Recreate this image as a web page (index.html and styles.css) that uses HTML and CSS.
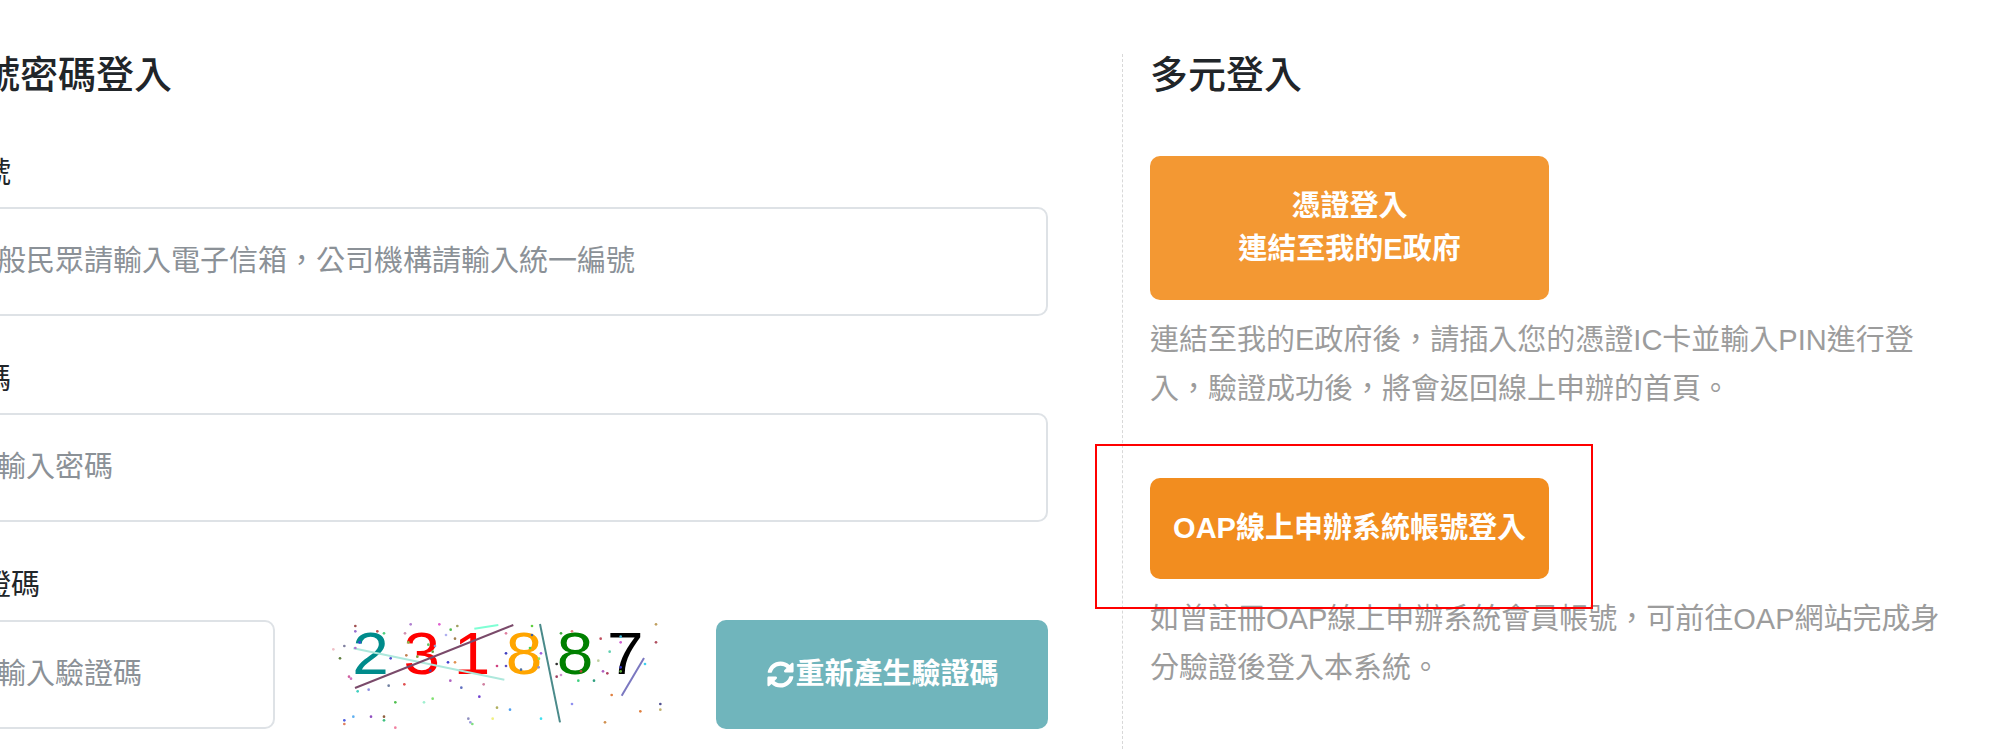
FILE: index.html
```html
<!DOCTYPE html>
<html lang="zh-Hant">
<head>
  <meta charset="UTF-8">
  <meta name="viewport" content="width=device-width, initial-scale=1.0">
  <title>線上申辦登入</title>
  <link rel="stylesheet" href="styles.css">
</head>
<body>
  <div class="login">
    <form class="login_form">
      <h2 class="title">帳號密碼登入</h2>

      <div class="field">
        <label class="field_label" for="account">帳號</label>
        <input class="field_input" id="account" type="text" placeholder="一般民眾請輸入電子信箱，公司機構請輸入統一編號">
      </div>

      <div class="field">
        <label class="field_label" for="password">密碼</label>
        <input class="field_input" id="password" type="password" placeholder="請輸入密碼">
      </div>

      <div class="field">
        <label class="field_label" for="captcha">驗證碼</label>
        <div class="captcha_row">
          <input class="field_input captcha_input" id="captcha" type="text" placeholder="請輸入驗證碼">
          <svg class="captcha_img" viewBox="0 18 1050 327" role="img" aria-label="驗證碼圖片">
            <g class="captcha_digits" transform="scale(1.12 1)">
              <text x="122" y="180" fill="#008b8b">2</text>
              <text x="259" y="180" fill="#ff0000">3</text>
              <text x="394" y="180" fill="#ff0000">1</text>
              <text x="533" y="180" fill="#ffa500">8</text>
              <text x="670" y="180" fill="#008000">8</text>
              <text x="804" y="180" fill="#000000">7</text>
            </g>
            <g class="captcha_lines">
              <line x1="85" y1="103" x2="538" y2="197" stroke="#aee8dc"/>
              <line x1="90" y1="222" x2="565" y2="33" stroke="#7a4a6a"/>
              <line x1="448" y1="44" x2="520" y2="33" stroke="#7fffd4"/>
              <line x1="645" y1="30" x2="705" y2="325" stroke="#4a8a8a"/>
              <line x1="890" y1="245" x2="957" y2="132" stroke="#7b78c0"/>
            </g>
            <g class="captcha_dots">
              <circle cx="91" cy="36" fill="#a05050"/><circle cx="91" cy="52" fill="#9a70d0"/>
              <circle cx="104" cy="85" fill="#4040e0"/><circle cx="91" cy="102" fill="#b070d0"/>
              <circle cx="157" cy="52" fill="#c05050"/><circle cx="177" cy="58" fill="#50d080"/>
              <circle cx="257" cy="31" fill="#b080d0"/><circle cx="343" cy="31" fill="#e060d0"/>
              <circle cx="397" cy="36" fill="#a0a060"/><circle cx="377" cy="47" fill="#50c050"/>
              <circle cx="363" cy="63" fill="#b0b0f0"/><circle cx="390" cy="74" fill="#a08050"/>
              <circle cx="240" cy="58" fill="#d090b0"/><circle cx="250" cy="85" fill="#80c050"/>
              <circle cx="310" cy="92" fill="#60c060"/><circle cx="330" cy="96" fill="#90a0d0"/>
              <circle cx="323" cy="113" fill="#60a040"/><circle cx="244" cy="124" fill="#c08050"/>
              <circle cx="277" cy="128" fill="#80a040"/><circle cx="197" cy="133" fill="#5050d0"/>
              <circle cx="369" cy="145" fill="#4040d0"/><circle cx="390" cy="145" fill="#e09050"/>
              <circle cx="316" cy="170" fill="#5040a0"/><circle cx="25" cy="106" fill="#f0c0c8"/>
              <circle cx="58" cy="96" fill="#8080a0"/><circle cx="45" cy="133" fill="#608040"/>
              <circle cx="72" cy="188" fill="#d060a0"/><circle cx="78" cy="194" fill="#d070c0"/>
              <circle cx="98" cy="232" fill="#40d0c0"/><circle cx="131" cy="227" fill="#9090e0"/>
              <circle cx="191" cy="215" fill="#7080a0"/><circle cx="238" cy="211" fill="#e05050"/>
              <circle cx="376" cy="200" fill="#b060c0"/><circle cx="409" cy="221" fill="#6070c0"/>
              <circle cx="476" cy="211" fill="#d080a0"/><circle cx="463" cy="248" fill="#7040d0"/>
              <circle cx="211" cy="265" fill="#50c050"/><circle cx="297" cy="265" fill="#a0f0d0"/>
              <circle cx="323" cy="254" fill="#80e070"/><circle cx="516" cy="281" fill="#b0b060"/>
              <circle cx="555" cy="287" fill="#50a0f0"/><circle cx="85" cy="308" fill="#60b0f0"/>
              <circle cx="58" cy="319" fill="#5060e0"/><circle cx="58" cy="330" fill="#e08060"/>
              <circle cx="138" cy="308" fill="#9050c0"/><circle cx="177" cy="308" fill="#906040"/>
              <circle cx="177" cy="319" fill="#40c080"/><circle cx="211" cy="341" fill="#f080a0"/>
              <circle cx="430" cy="314" fill="#9090c0"/><circle cx="436" cy="325" fill="#a0a0e0"/>
              <circle cx="442" cy="330" fill="#80e080"/><circle cx="503" cy="314" fill="#f0f080"/>
              <circle cx="648" cy="314" fill="#40e0f0"/><circle cx="516" cy="156" fill="#d04080"/>
              <circle cx="543" cy="118" fill="#4040c0"/><circle cx="543" cy="156" fill="#6050c0"/>
              <circle cx="543" cy="58" fill="#e080a0"/><circle cx="621" cy="36" fill="#60d040"/>
              <circle cx="621" cy="63" fill="#4060a0"/><circle cx="615" cy="102" fill="#50d050"/>
              <circle cx="648" cy="118" fill="#a060e0"/><circle cx="642" cy="134" fill="#90e060"/>
              <circle cx="641" cy="160" fill="#9090d0"/><circle cx="588" cy="167" fill="#5070a0"/>
              <circle cx="708" cy="58" fill="#40b040"/><circle cx="741" cy="52" fill="#e08080"/>
              <circle cx="695" cy="150" fill="#303030"/><circle cx="695" cy="188" fill="#a04060"/>
              <circle cx="708" cy="183" fill="#d090d0"/><circle cx="768" cy="172" fill="#c04040"/>
              <circle cx="760" cy="200" fill="#40d080"/><circle cx="807" cy="200" fill="#30a080"/>
              <circle cx="741" cy="270" fill="#9090f0"/><circle cx="827" cy="74" fill="#c05060"/>
              <circle cx="854" cy="113" fill="#60d0b0"/><circle cx="820" cy="140" fill="#c0d0a0"/>
              <circle cx="834" cy="172" fill="#b060c0"/><circle cx="847" cy="178" fill="#b04060"/>
              <circle cx="887" cy="68" fill="#40c0e0"/><circle cx="887" cy="85" fill="#d060d0"/>
              <circle cx="887" cy="160" fill="#3030c0"/><circle cx="887" cy="172" fill="#60b040"/>
              <circle cx="960" cy="150" fill="#40d0f0"/><circle cx="860" cy="243" fill="#e08040"/>
              <circle cx="993" cy="31" fill="#c0a060"/><circle cx="993" cy="85" fill="#b05060"/>
              <circle cx="1006" cy="270" fill="#505090"/><circle cx="1006" cy="287" fill="#c0b070"/>
              <circle cx="946" cy="292" fill="#e08040"/><circle cx="840" cy="325" fill="#d09050"/>
            </g>
          </svg>
          <button class="refresh" type="button">
            <svg class="refresh_icon" viewBox="0 0 512 512" aria-hidden="true">
              <path d="M370.72 133.28C339.458 104.008 298.888 87.962 255.848 88c-77.458.068-144.328 53.178-162.791 126.85-1.344 5.363-6.122 9.15-11.651 9.15H24.103c-7.498 0-13.194-6.807-11.807-14.176C33.933 94.924 134.813 8 256 8c66.448 0 126.791 26.136 171.315 68.685L463.03 40.97C478.149 25.851 504 36.559 504 57.941V192c0 13.255-10.745 24-24 24H345.941c-21.382 0-32.09-25.851-16.971-40.971l41.75-41.749zM32 296h134.059c21.382 0 32.09 25.851 16.971 40.971l-41.75 41.75c31.262 29.273 71.835 45.319 114.876 45.28 77.418-.07 144.315-53.144 162.787-126.849 1.344-5.363 6.122-9.15 11.651-9.15h57.304c7.498 0 13.194 6.807 11.807 14.176C478.067 417.076 377.187 504 256 504c-66.448 0-126.791-26.136-171.315-68.685L48.97 471.03C33.851 486.149 8 475.441 8 454.059V320c0-13.255 10.745-24 24-24z"/>
            </svg>
            重新產生驗證碼
          </button>
        </div>
      </div>
    </form>

    <div class="login_other">
      <h2 class="title">多元登入</h2>

      <a class="other_btn other_btn_card" href="#">憑證登入<br>連結至我的E政府</a>
      <p class="other_text">連結至我的E政府後，請插入您的憑證IC卡並輸入PIN進行登入，驗證成功後，將會返回線上申辦的首頁。</p>

      <div class="other_mark">
        <a class="other_btn other_btn_oap" href="#">OAP線上申辦系統帳號登入</a>
        <div class="mark_box"></div>
      </div>
      <p class="other_text">如曾註冊OAP線上申辦系統會員帳號，可前往OAP網站完成身分驗證後登入本系統。</p>
    </div>
  </div>
</body>
</html>
```

FILE: styles.css
```css
html, body {
  margin: 0;
  padding: 0;
  height: 100%;
}
body {
  background-color: white;
  color: #212529;
  font-family: "Liberation Sans", "Noto Sans CJK TC", sans-serif;
  font-size: 29px;
  line-height: 43.2px;
  overflow: hidden;
}
.login {
  display: flex;
  height: 100%;
  padding-top: 54px;
  margin-left: -47px;
  box-sizing: border-box;
}
.login_form {
  flex: none;
  width: 1095px;
  margin-right: 74px;
}
.title {
  margin: -1px 0 55px;
  font-size: 38px;
  font-weight: 500;
  line-height: 44px;
}
.login_form .title {
  margin-left: -9px;
}
.login_other .title {
  margin-bottom: 59px;
}
.field {
  margin-bottom: 42px;
}
.field_label {
  display: block;
  margin-bottom: 12px;
}
.field_input {
  display: block;
  width: 100%;
  height: 109px;
  padding: 0 13px;
  box-sizing: border-box;
  border: 2px solid #dee2e6;
  border-radius: 10px;
  font: inherit;
  color: #495057;
  background: white;
}
.field_input::placeholder {
  color: #8b9197;
  opacity: 1;
}
.captcha_row {
  display: flex;
}
.captcha_input {
  flex: none;
  width: 322px;
}
.captcha_img {
  flex: none;
  width: 350px;
  height: 109px;
  margin-left: 50px;
  margin-right: 41px;
}
.captcha_digits {
  font-family: "Liberation Sans", sans-serif;
  font-size: 176px;
  text-anchor: middle;
  filter: blur(1.5px);
}
.captcha_lines line {
  stroke-width: 6;
  filter: blur(1px);
}
.captcha_dots circle {
  r: 4px;
}
.refresh {
  flex: none;
  width: 332px;
  height: 109px;
  padding: 0 0 0 2px;
  display: flex;
  align-items: center;
  justify-content: center;
  gap: 1px;
  border: none;
  border-radius: 10px;
  background-color: #70b5bc;
  color: white;
  font: inherit;
  font-weight: 700;
  cursor: pointer;
}
.refresh_icon {
  width: 27px;
  height: 27px;
  fill: white;
}
.login_other {
  flex: none;
  width: 791px;
  padding-left: 27px;
  border-left: 1px dashed #d8d8d8;
}
.other_btn {
  display: block;
  width: 399px;
  padding: 28.8px 0;
  box-sizing: border-box;
  border-radius: 10px;
  color: white;
  font-weight: 700;
  text-align: center;
  text-decoration: none;
}
.other_btn_card {
  background-color: #f39833;
}
.other_btn_oap {
  background-color: #f28d1f;
}
.other_text {
  margin: 16px 0 64px;
  color: #9c9c9c;
  line-height: 49px;
}
.other_mark {
  position: relative;
}
.mark_box {
  position: absolute;
  top: -34px;
  left: -55px;
  width: 498px;
  height: 165px;
  box-sizing: border-box;
  border: 2px solid #ff0000;
}
```
